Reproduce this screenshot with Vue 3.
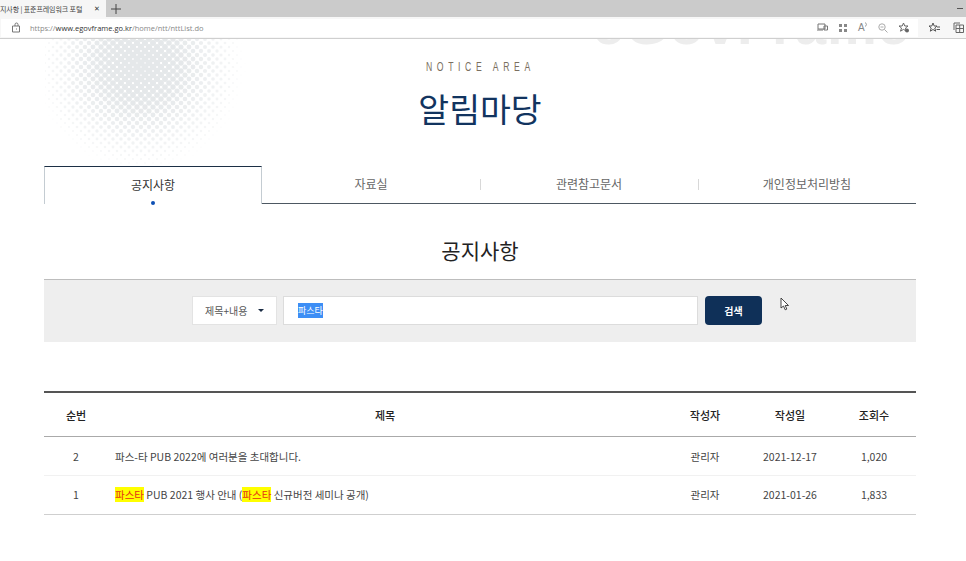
<script setup>
const dots = []
const cx = 95, cy = 26, R = 106
for (let y = 0; y <= 130; y += 4) {
  const row = y / 4
  for (let x = row % 2 ? 4 : 0; x <= 200; x += 8) {
    const d = Math.hypot(x - cx, y - cy)
    if (d < R) {
      const k = 1 - d / R
      dots.push({
        x,
        y,
        r: (3.5 * Math.pow(k, 0.55)).toFixed(2),
        o: Math.min(1, 0.2 + k * 1.3).toFixed(2)
      })
    }
  }
}
const rows = [
  { no: 2, parts: [{ t: '파스-타 PUB 2022에 여러분을 초대합니다.' }], date: '2021-12-17', views: '1,020' },
  { no: 1, parts: [{ t: '파스타', hit: true }, { t: ' PUB 2021 행사 안내 (' }, { t: '파스타', hit: true }, { t: ' 신규버전 세미나 공개)' }], date: '2021-01-26', views: '1,833' }
]
const tabs = ['공지사항', '자료실', '관련참고문서', '개인정보처리방침']
</script>

<template>
  <div class="screen">
    <header class="chrome">
      <div class="strip">
        <div class="tab">
          <span class="tab-title">지사항 | 표준프레임워크 포털</span>
          <span class="tab-close">✕</span>
        </div>
        <svg class="plus" width="10" height="10" viewBox="0 0 10 10"><path d="M5 0v10M0 5h10" stroke="#444" fill="none" /></svg>
        <span class="minimize"></span>
      </div>
      <div class="bar">
        <div class="field">
          <svg class="lock" width="9" height="11" viewBox="0 0 9 11"><path d="M1.500 4h6v6h-7V4zM3 4V2.500a1.500 1.500 0 0 1 3 0V4M4 7h1" stroke="#777" fill="none" /></svg>
          <span class="url">https://<b>www.egovframe.go.kr</b>/home/ntt/nttList.do</span>
          <div class="field-icons">
            <svg width="11" height="9" viewBox="0 0 11 9"><path d="M1 1h7v5H1zM0 7h6M7 3h3.500v4H7z" stroke="#777" fill="none" /></svg>
            <svg width="10" height="10" viewBox="0 0 10 10"><path d="M1 1h3v3H1zM6 1h3v3H6zM1 6h3v3H1zM6 6h3v3H6z" fill="#888" /></svg>
            <span class="aa">A<svg width="3" height="5" viewBox="0 0 3 5"><path d="M.5 .5a3 3 0 0 1 0 4" stroke="#999" fill="none" /></svg></span>
            <svg width="10" height="10" viewBox="0 0 10 10"><circle cx="4" cy="4" r="3.200" stroke="#aaa" fill="none" /><path d="M2.500 4h3M6.500 6.500L9.500 9.500" stroke="#aaa" fill="none" /></svg>
            <svg width="12" height="11" viewBox="0 0 12 11"><path d="M5.500 1l1.300 3h3.200L7.500 6l1 3.200-3-1.800-3 1.800 1-3.200L1 4h3.200z" stroke="#666" fill="none" /><circle cx="9" cy="8.500" r="2" fill="#666" /></svg>
          </div>
        </div>
        <svg class="bar-icon star" width="12" height="11" viewBox="0 0 12 11"><path d="M5 1l1.200 3H9L6.800 6l.9 3.200L5 7.500 2.300 9.200l.9-3.200L1 4h2.800zM9 5h3M8.500 7.500H12" stroke="#555" fill="none" /></svg>
        <svg class="bar-icon coll" width="11" height="11" viewBox="0 0 11 11"><path d="M3 3h7.500v7.500H3zM3 6.500h7.500M6.700 3v7.500M1 8V1h6" stroke="#666" fill="none" /></svg>
      </div>
    </header>

    <main class="page">
      <svg class="halftone" width="204" height="132" viewBox="0 0 204 132">
        <circle v-for="(d, i) in dots" :key="i" :cx="d.x" :cy="d.y" :r="d.r" :fill-opacity="d.o" fill="#e5e8ea" />
      </svg>
      <div class="watermark">eGovFrame</div>

      <section class="hero">
        <p class="eyebrow">NOTICE AREA</p>
        <h1 class="hero-title">알림마당</h1>
      </section>

      <nav class="tabs">
        <div v-for="(t, i) in tabs" :key="t" class="tab-item" :class="{ active: i === 0, sep: i > 1 }">
          <span>{{ t }}</span>
        </div>
      </nav>

      <h2 class="section-title">공지사항</h2>

      <div class="search">
        <div class="select">
          <span>제목+내용</span>
          <i class="caret"></i>
        </div>
        <div class="input"><span class="selected">파스타</span></div>
        <button class="btn">검색</button>
        <svg class="cursor" width="10" height="14" viewBox="0 0 10 14"><path d="M1 1v10l2.500-2 1.700 3.800 1.600-.7L5.200 8.500H8.500z" fill="#fff" stroke="#333" stroke-width=".9" /></svg>
      </div>

      <table class="board">
        <colgroup>
          <col class="c1" /><col /><col class="c3" /><col class="c4" /><col class="c5" />
        </colgroup>
        <thead>
          <tr>
            <th>순번</th><th>제목</th><th>작성자</th><th class="nudge">작성일</th><th class="nudge">조회수</th>
          </tr>
        </thead>
        <tbody>
          <tr v-for="r in rows" :key="r.no">
            <td>{{ r.no }}</td>
            <td class="subject"><template v-for="(p, i) in r.parts" :key="i"><mark v-if="p.hit">{{ p.t }}</mark><template v-else>{{ p.t }}</template></template></td>
            <td>관리자</td>
            <td class="nudge">{{ r.date }}</td>
            <td class="nudge">{{ r.views }}</td>
          </tr>
        </tbody>
      </table>
    </main>
  </div>
</template>

<style>
html, body { margin: 0; background: #fff; overflow: hidden; }
</style>

<style scoped>
.screen {
  width: 966px;
  height: 561px;
  overflow: hidden;
  font-family: "Noto Sans CJK KR", "Noto Sans", sans-serif;
  color: #333;
  background: #fff;
  display: flex;
  flex-direction: column;
}
.chrome { position: relative; z-index: 2; flex: none; }
.strip {
  height: 17px;
  background: #cbcbcb;
  display: flex;
  align-items: center;
}
.tab {
  width: 106px;
  height: 17px;
  background: #f6f6f6;
  display: flex;
  align-items: center;
  overflow: hidden;
  box-sizing: border-box;
}
.tab-title {
  font-size: 7px;
  letter-spacing: -.1px;
  color: #444;
  white-space: nowrap;
  width: 92px;
}
.tab-close { font-size: 7px; color: #333; margin-left: 2px; font-family: "DejaVu Sans", sans-serif; }
.plus { margin-left: 5px; }
.minimize { width: 6px; height: 1px; background: #555; margin-left: auto; margin-right: 3px; }
.bar {
  height: 21px;
  background: #f7f7f7;
  border-bottom: 1px solid #cfcfcf;
  display: flex;
  align-items: center;
}
.field {
  width: 917px;
  height: 18px;
  margin-left: 1px;
  background: #fff;
  display: flex;
  align-items: center;
}
.lock { margin-left: 11px; }
.url {
  margin-left: 9px;
  font-size: 7.5px;
  font-family: "Open Sans", sans-serif;
  color: #888;
}
.url b { font-weight: 400; color: #333; }
.field-icons {
  margin-left: auto;
  display: flex;
  align-items: center;
  gap: 10px;
  margin-right: 8px;
}
.aa {
  display: flex;
  font-size: 10px;
  line-height: 11px;
  color: #888;
  font-family: "Liberation Sans", sans-serif;
  width: 10px;
}
.bar-icon { flex: none; }
.star { margin-left: 10px; }
.coll { margin-left: 13px; }

.page {
  position: relative;
  flex: 1;
  padding: 0 50px 0 44px;
  overflow: hidden;
}
.halftone { position: absolute; left: 45px; top: 0; }
.watermark {
  position: absolute;
  right: 56px;
  top: -50px;
  font-family: "Liberation Sans", sans-serif;
  font-weight: 700;
  font-size: 56px;
  line-height: 72px;
  letter-spacing: 1px;
  color: #ededed;
  white-space: nowrap;
}
.hero {
  position: relative;
  height: 127px;
  text-align: center;
}
.eyebrow {
  margin: 0;
  padding-top: 21px;
  padding-left: 1px;
  font-family: "Liberation Sans", sans-serif;
  font-size: 12px;
  line-height: 14px;
  letter-spacing: 6.4px;
  color: #7a6f60;
  transform: scaleX(.72);
}
.hero-title {
  margin: 8px 0 0;
  font-size: 33.500px;
  line-height: 52px;
  font-weight: 400;
  color: #12345f;
}
.tabs {
  position: relative;
  display: flex;
  height: 38px;
  box-sizing: border-box;
  border-bottom: 1px solid #4d5862;
}
.tab-item {
  flex: 1;
  position: relative;
  display: flex;
  justify-content: center;
  align-items: center;
  font-size: 12px;
  color: #666;
  padding-bottom: 3px;
}
.tab-item.active {
  height: 38px;
  flex: none;
  width: 218px;
  box-sizing: border-box;
  background: #fff;
  color: #333;
  border: 1px solid #c4ccd2;
  border-top-color: #1c2f45;
  border-bottom: 0;
  padding-bottom: 2px;
}
.tab-item.active::after {
  content: "";
  position: absolute;
  left: 106px;
  bottom: -1px;
  width: 4px;
  height: 4px;
  border-radius: 50%;
  background: #0d50b4;
}
.tab-item.sep::before {
  content: "";
  position: absolute;
  left: 0;
  top: 13px;
  height: 11px;
  width: 1px;
  background: #d8d8d8;
}
.section-title {
  margin: 28px 0 0;
  height: 47px;
  font-size: 21px;
  line-height: 36px;
  font-weight: 400;
  text-align: center;
  color: #222;
}
.search {
  position: relative;
  height: 63px;
  box-sizing: border-box;
  border-top: 1px solid #bdbdbd;
  background: #eeeeee;
  display: flex;
  padding-top: 16px;
  padding-left: 148px;
}
.select {
  width: 85px;
  height: 29px;
  box-sizing: border-box;
  background: #fff;
  border: 1px solid #e3e3e3;
  display: flex;
  align-items: center;
  font-size: 10px;
  color: #555;
  padding-left: 12px;
}
.caret {
  margin-left: 11px;
  width: 0;
  height: 0;
  border: 3.500px solid transparent;
  border-top: 3.500px solid #1a2c44;
  border-bottom: 0;
}
.input {
  width: 415px;
  height: 29px;
  margin-left: 6px;
  box-sizing: border-box;
  background: #fff;
  border: 1px solid #dcdcdc;
  display: flex;
  align-items: center;
  padding-left: 14px;
  font-size: 9px;
}
.selected {
  background: #3d8ef5;
  color: #fff;
  line-height: 15px;
}
.btn {
  width: 57px;
  height: 29px;
  margin-left: 7px;
  border: 0;
  padding: 0;
  border-radius: 4px;
  background: #0f3058;
  color: #fff;
  font: 700 10px "Noto Sans CJK KR", sans-serif;
}
.cursor { position: absolute; left: 736px; top: 17px; }
.board {
  margin-top: 49px;
  width: 872px;
  table-layout: fixed;
  border-collapse: collapse;
  border-top: 2px solid #555;
  font-size: 10.500px;
}
.c1 { width: 64px; }
.c3 { width: 86px; }
.c4 { width: 82px; }
.c5 { width: 86px; }
.board th {
  height: 43px;
  padding: 0;
  font-weight: 500;
  font-size: 11px;
  color: #222;
  border-bottom: 1px solid #aaa;
}
.board td {
  height: 38px;
  padding: 0;
  text-align: center;
  color: #444;
  border-bottom: 1px solid #f1f1f1;
}
.board tr:last-child td {
  height: 37px;
  padding-bottom: 1px;
  border-bottom-color: #cfcfcf;
}
.board .subject { text-align: left; padding-left: 7px; }
.board .nudge { padding-left: 2px; }
mark {
  background: #ffff00;
  color: #e53015;
}
</style>
